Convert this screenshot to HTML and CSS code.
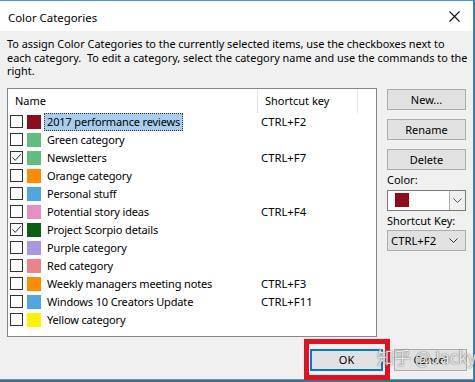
FILE: index.html
```html
<!DOCTYPE html>
<html>
<head>
<meta charset="utf-8">
<link rel="stylesheet" href="styles.css">
</head>
<body>
<div class="win">
  <div class="titlebar">
    <span class="title">Color Categories</span>
    <svg class="close" width="11" height="11" viewBox="0 0 11 11"><path d="M0.5 0.5L10.5 10.5M10.5 0.5L0.5 10.5" stroke="#111" stroke-width="1.1" fill="none"/></svg>
  </div>
  <div class="content">
    <p class="desc">To assign Color Categories to the currently selected items, use the checkboxes next to each category.&nbsp; To edit a category, select the category name and use the commands to the right.</p>
    <div class="main">
      <div class="list">
        <div class="lhead">
          <div class="hname">Name</div>
          <div class="hkey">Shortcut key</div>
          <div class="hrest"></div>
        </div>
        <div class="row"><span class="cb"></span><span class="sw" style="background:#900c1c"></span><span class="nmcell"><span class="nm sel">2017 performance reviews</span></span><span class="key">CTRL+F2</span></div>
        <div class="row"><span class="cb"></span><span class="sw" style="background:#5fbe7d"></span><span class="nmcell"><span class="nm">Green category</span></span><span class="key"></span></div>
        <div class="row"><span class="cb on"><svg width="11" height="11" viewBox="0 0 11 11"><path d="M1.5 5.5L4.2 8.3L9.8 2.2" stroke="#333" stroke-width="1" fill="none"/></svg></span><span class="sw" style="background:#5fbe7d"></span><span class="nmcell"><span class="nm">Newsletters</span></span><span class="key">CTRL+F7</span></div>
        <div class="row"><span class="cb"></span><span class="sw" style="background:#ff8c00"></span><span class="nmcell"><span class="nm">Orange category</span></span><span class="key"></span></div>
        <div class="row"><span class="cb"></span><span class="sw" style="background:#4ea6e3"></span><span class="nmcell"><span class="nm">Personal stuff</span></span><span class="key"></span></div>
        <div class="row"><span class="cb"></span><span class="sw" style="background:#e68fc0"></span><span class="nmcell"><span class="nm">Potential story ideas</span></span><span class="key">CTRL+F4</span></div>
        <div class="row"><span class="cb on"><svg width="11" height="11" viewBox="0 0 11 11"><path d="M1.5 5.5L4.2 8.3L9.8 2.2" stroke="#333" stroke-width="1" fill="none"/></svg></span><span class="sw" style="background:#0a5f0e"></span><span class="nmcell"><span class="nm">Project Scorpio details</span></span><span class="key"></span></div>
        <div class="row"><span class="cb"></span><span class="sw" style="background:#a896e2"></span><span class="nmcell"><span class="nm">Purple category</span></span><span class="key"></span></div>
        <div class="row"><span class="cb"></span><span class="sw" style="background:#f0808a"></span><span class="nmcell"><span class="nm">Red category</span></span><span class="key"></span></div>
        <div class="row"><span class="cb"></span><span class="sw" style="background:#ff8c00"></span><span class="nmcell"><span class="nm">Weekly managers meeting notes</span></span><span class="key">CTRL+F3</span></div>
        <div class="row"><span class="cb"></span><span class="sw" style="background:#4ea6e3"></span><span class="nmcell"><span class="nm">Windows 10 Creators Update</span></span><span class="key">CTRL+F11</span></div>
        <div class="row"><span class="cb"></span><span class="sw" style="background:#fff200"></span><span class="nmcell"><span class="nm">Yellow category</span></span><span class="key"></span></div>
      </div>
      <div class="side">
        <div class="btn">New...</div>
        <div class="btn">Rename</div>
        <div class="btn">Delete</div>
        <div class="lbl">Color:</div>
        <div class="combo white">
          <span class="csw"></span>
          <span class="drop"><svg width="9" height="5" viewBox="0 0 9 5"><path d="M0.5 0.5L4.5 4.5L8.5 0.5" stroke="#555" fill="none"/></svg></span>
        </div>
        <div class="lbl lbl2">Shortcut Key:</div>
        <div class="combo gray">
          <span class="ctext">CTRL+F2</span>
          <svg class="chev" width="9" height="5" viewBox="0 0 9 5"><path d="M0.5 0.5L4.5 4.5L8.5 0.5" stroke="#333" fill="none"/></svg>
        </div>
      </div>
    </div>
    <div class="footer">
      <div class="btn ok">OK</div>
      <div class="btn">Cancel</div>
    </div>
  </div>
  <div class="redbox"></div>
  <div class="mark">知乎 @Jacky</div>
</div>
</body>
</html>
```

FILE: styles.css
```css
html, body {
  margin: 0;
  padding: 0;
}
body {
  width: 475px;
  height: 382px;
  overflow: hidden;
  background: #3d6f8e;
  font-family: "Noto Sans", "Liberation Sans", sans-serif;
  font-size: 11px;
  color: #000;
}
.win {
  position: relative;
  width: 473px;
  height: 378px;
  border-top: 1px solid #4f95d6;
  border-right: 1px solid #3a88d2;
  border-bottom: 1px solid #5a9ad0;
  background: #f0f0f0;
  display: flex;
  flex-direction: column;
}
.titlebar {
  height: 30px;
  background: #fff;
  display: flex;
  align-items: center;
  justify-content: space-between;
  padding: 0 13px 0 8px;
}
.title {
  font-size: 11.4px;
  position: relative;
  top: 1px;
}
.content {
  flex: 1;
  padding: 6px 6px 0 7px;
  display: flex;
  flex-direction: column;
}
.desc {
  margin: 0;
  font-size: 10.9px;
  line-height: 13.5px;
  width: 462px;
}
.main {
  display: flex;
  gap: 10px;
  margin-top: 10px;
}
.list {
  width: 368px;
  height: 247px;
  background: #fff;
  border: 1px solid #828790;
}
.lhead {
  display: flex;
  height: 24px;
  align-items: stretch;
}
.hname {
  width: 242px;
  padding-left: 7px;
  display: flex;
  align-items: center;
  border-right: 1px solid #e5e5e5;
}
.hkey {
  width: 92px;
  padding-left: 7px;
  display: flex;
  align-items: center;
  border-right: 1px solid #e5e5e5;
}
.row {
  height: 18px;
  display: flex;
  align-items: center;
  letter-spacing: -0.15px;
}
.cb {
  width: 11px;
  height: 11px;
  border: 1px solid #333;
  margin-left: 2px;
  background: #fff;
  display: flex;
  flex: none;
}
.sw {
  width: 14px;
  height: 14px;
  margin-left: 4px;
  flex: none;
}
.nmcell {
  width: 217px;
  margin-left: 3px;
  flex: none;
  display: flex;
}
.nm {
  padding: 0 2px;
  line-height: 16px;
  border: 1px dotted transparent;
}
.nm.sel {
  background: #a9cdee;
  border-color: #333;
}
.key {
  width: 90px;
  letter-spacing: 0;
  font-size: 11.3px;
}
.side {
  width: 79px;
  display: flex;
  flex-direction: column;
  padding-top: 1px;
}
.btn {
  height: 19px;
  background: #e1e1e1;
  border: 1px solid #adadad;
  display: flex;
  align-items: center;
  justify-content: center;
  margin-bottom: 9px;
}
.side .btn:nth-child(3) {
  margin-bottom: 0;
}
.lbl {
  height: 20px;
  display: flex;
  align-items: center;
}
.lbl2 {
  height: 19px;
}
.combo {
  height: 19px;
  border: 1px solid #adadad;
  display: flex;
  align-items: center;
}
.white {
  background: #fff;
  border-color: #7a7a7a;
}
.csw {
  width: 14px;
  height: 14px;
  background: #900c1c;
  margin-left: 7px;
}
.drop {
  margin-left: auto;
  width: 15px;
  height: 19px;
  background: #f0f0f0;
  border-left: 1px solid #adadad;
  display: flex;
  align-items: center;
  justify-content: center;
}
.gray {
  background: #e1e1e1;
  padding: 0 7px 0 3px;
  justify-content: space-between;
  font-size: 11.3px;
}
.footer {
  display: flex;
  justify-content: flex-end;
  gap: 11px;
  margin-top: 12px;
}
.footer .btn {
  width: 71px;
  height: 20px;
  margin: 0;
}
.footer .ok {
  border: 2px solid #0078d7;
  width: 69px;
  height: 18px;
}
.redbox {
  position: absolute;
  left: 304px;
  top: 338px;
  width: 76px;
  height: 31px;
  border: 5px solid #e3101e;
}
.mark {
  position: absolute;
  left: 377px;
  top: 346px;
  font-size: 17px;
  line-height: 20px;
  color: rgba(255, 255, 255, 0.85);
  text-shadow: 0 0 1px rgba(70,70,70,0.8), 0 0 2px rgba(90,90,90,0.5);
  font-family: "Noto Sans CJK SC", "Noto Sans", sans-serif;
  white-space: nowrap;
}
```
